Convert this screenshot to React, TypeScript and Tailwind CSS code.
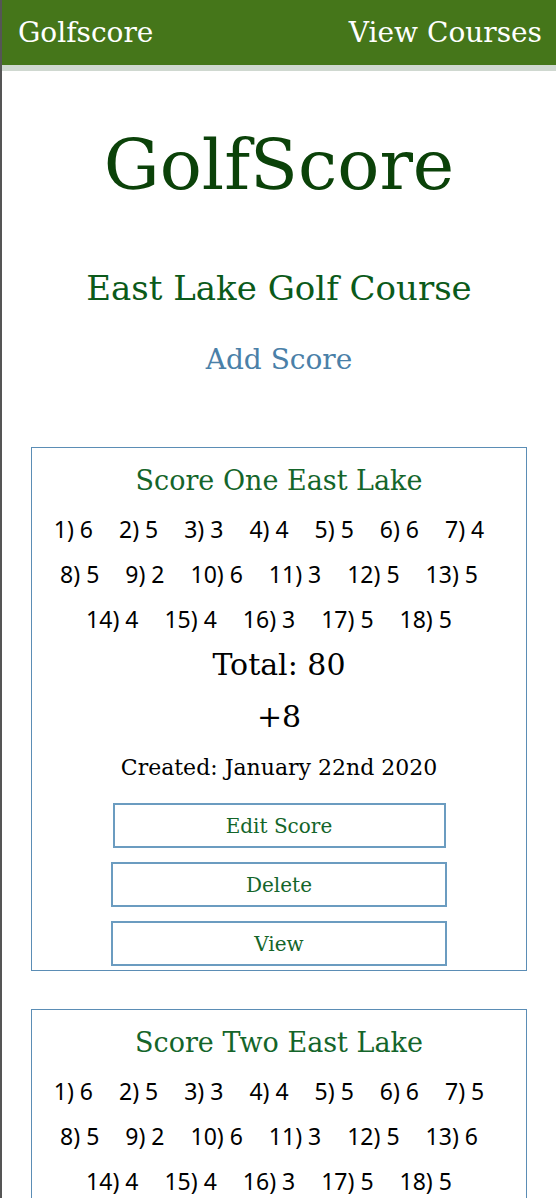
import React from "react";

type Score = {
  title: string;
  holes: number[];
  total: number;
  par: string;
  created: string;
};

const scores: Score[] = [
  {
    title: "Score One East Lake",
    holes: [6, 5, 3, 4, 5, 6, 4, 5, 2, 6, 3, 5, 5, 4, 4, 3, 5, 5],
    total: 80,
    par: "+8",
    created: "January 22nd 2020",
  },
  {
    title: "Score Two East Lake",
    holes: [6, 5, 3, 4, 5, 6, 5, 5, 2, 6, 3, 5, 6, 4, 4, 3, 5, 5],
    total: 82,
    par: "+10",
    created: "January 24th 2020",
  },
];

const serif = "font-['DejaVu_Serif','Liberation_Serif',serif]";
const sans = "font-['Noto_Sans','Open_Sans',sans-serif]";

// rows break the same way the original page wraps them
const rows = [
  [0, 7],
  [7, 13],
  [13, 18],
];

function ScoreCard({ score }: { score: Score }) {
  return (
    <div className="mx-auto w-[496px] border border-[#5b8db5] px-2 pt-[13px] pb-[4px] text-center">
      <h3 className={`${serif} text-[27px] leading-[40px] text-[#14652a]`}>
        {score.title}
      </h3>

      {/* Hole by hole (trailing spacing pushes rows a little left) */}
      <div className={`${sans} mt-[6px] pr-[20px] text-[23px] leading-[45px] text-black`}>
        {rows.map(([from, to]) => (
          <div key={from} className="flex justify-center gap-x-[26px]">
            {score.holes.slice(from, to).map((s, i) => (
              <span key={i}>
                {from + i + 1}) {s}
              </span>
            ))}
          </div>
        ))}
      </div>

      <p className={`${serif} text-[30px] leading-[45px] text-black`}>
        Total: {score.total}
      </p>
      <p className={`${serif} mt-[7px] text-[30px] leading-[45px] text-black`}>
        {score.par}
      </p>
      <p className={`${serif} mt-[6px] text-[22px] leading-[45px] text-black`}>
        Created: {score.created}
      </p>

      <div className="mt-[13px] flex flex-col items-center gap-[14px]">
        <button className={`${serif} h-[45px] w-[333px] border-2 border-[#6b9cc0] bg-white text-[20px] text-[#14652a]`}>
          Edit Score
        </button>
        <button className={`${serif} h-[45px] w-[336px] border-2 border-[#6b9cc0] bg-white text-[20px] text-[#14652a]`}>
          Delete
        </button>
        <button className={`${serif} h-[45px] w-[336px] border-2 border-[#6b9cc0] bg-white text-[20px] text-[#14652a]`}>
          View
        </button>
      </div>
    </div>
  );
}

export default function App() {
  return (
    <div className="min-h-screen border-l-2 border-[#555555] bg-white">
      {/* Nav */}
      <header className={`${serif} flex h-[71px] items-center justify-between border-b-[6px] border-[#cfd8d0] bg-[#45761a] pl-4 pr-[14px] text-[28px] text-white`}>
        <span>Golfscore</span>
        <span>View Courses</span>
      </header>

      <main className="pb-10 text-center">
        <h1 className={`${serif} mt-[46px] text-[70px] leading-[96px] text-[#0b4209]`}>
          GolfScore
        </h1>
        <h2 className={`${serif} mt-[51px] text-[34px] leading-[48px] text-[#0b5a1a]`}>
          East Lake Golf Course
        </h2>
        <a className={`${serif} mt-[28px] block text-[28px] leading-[40px] text-[#4a80a8]`}>
          Add Score
        </a>

        <div className="mt-[67px] flex flex-col gap-[38px]">
          {scores.map((s) => (
            <ScoreCard key={s.title} score={s} />
          ))}
        </div>
      </main>
    </div>
  );
}
